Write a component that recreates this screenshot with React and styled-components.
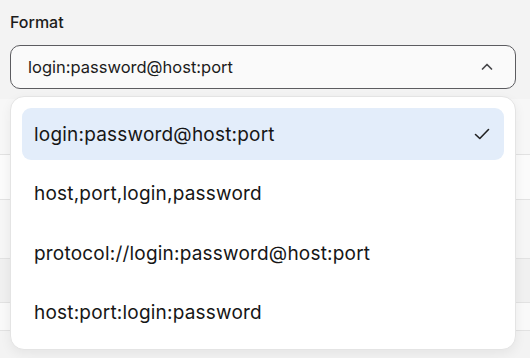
import React from "react";
import styled, { createGlobalStyle } from "styled-components";

const Global = createGlobalStyle`
  html, body {
    margin: 0;
    padding: 0;
    background: #f3f3f3;
    font-family: Inter, "Noto Sans", sans-serif;
    color: #1c1c1c;
  }
`;

const Page = styled.div`
  width: 530px;
  height: 358px;
  overflow: hidden;
  padding: 12px 14px 0 10px;
  box-sizing: border-box;
`;

const Label = styled.div`
  font-size: 16px;
  font-weight: 500;
  line-height: 20px;
  margin-bottom: 13px;
`;

const Field = styled.div`
  position: relative;
`;

const Trigger = styled.div`
  height: 44px;
  box-sizing: border-box;
  border: 1px solid #5c5c60;
  border-radius: 10px;
  background: #fafafa;
  display: flex;
  align-items: center;
  justify-content: space-between;
  padding: 0 20px 0 17px;
  font-size: 16.5px;
  color: #1c1c1c;
`;

const Backdrop = styled.div`
  margin: 10px -14px 0 -10px;
  display: flex;
  flex-direction: column;
  background: #f7f7f7;
`;

const BackRow = styled.div`
  height: ${(p) => p.h}px;
  background: ${(p) => p.bg};
  border-bottom: 1px solid #e2e2e2;
  box-sizing: border-box;
`;

const Menu = styled.div`
  position: absolute;
  top: 51px;
  left: 0;
  right: 0;
  background: #ffffff;
  border: 1px solid #e4e4e4;
  border-radius: 14px;
  box-shadow: 0 4px 12px rgba(0, 0, 0, 0.06);
  padding: 11px 11px 10px;
  display: flex;
  flex-direction: column;
  gap: 7.5px;
`;

const Item = styled.div`
  height: 52px;
  border-radius: 9px;
  background: ${(p) => (p.$active ? "#e3edfa" : "transparent")};
  display: flex;
  align-items: center;
  justify-content: space-between;
  padding: 0 13px 0 12px;
  font-size: 19px;
  letter-spacing: 0.2px;
  color: #161616;
`;

const Chevron = () => (
  <svg width="16" height="16" viewBox="0 0 16 16" fill="none">
    <path d="M3.5 10 L8 5.5 L12.5 10" stroke="#48484c" strokeWidth="1.7" strokeLinecap="round" strokeLinejoin="round" />
  </svg>
);

const Check = () => (
  <svg width="18" height="18" viewBox="0 0 18 18" fill="none">
    <path d="M2.5 9.5 L6.8 13.5 L15.5 4.5" stroke="#222" strokeWidth="1.6" strokeLinecap="round" strokeLinejoin="round" />
  </svg>
);

const formats = [
  "login:password@host:port",
  "host,port,login,password",
  "protocol://login:password@host:port",
  "host:port:login:password",
];

export default function App() {
  const selected = formats[0];
  return (
    <Page>
      <Global />
      <Label>Format</Label>
      <Field>
        <Trigger>
          <span>{selected}</span>
          <Chevron />
        </Trigger>
        <Backdrop>
          <BackRow h={56} bg="#f7f7f7" />
          <BackRow h={45} bg="#fbfbfb" />
          <BackRow h={59} bg="#f6f6f6" />
          <BackRow h={44} bg="#f0f0f0" />
          <BackRow h={28} bg="#f9f9f9" />
        </Backdrop>
        <Menu>
          {formats.map((f) => (
            <Item key={f} $active={f === selected}>
              <span>{f}</span>
              {f === selected && <Check />}
            </Item>
          ))}
        </Menu>
      </Field>
    </Page>
  );
}
